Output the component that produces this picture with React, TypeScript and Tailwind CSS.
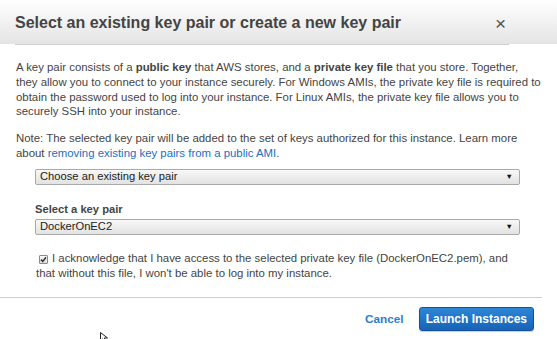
export default function App() {
  return (
    <div className="relative w-[557px] h-[339px] overflow-hidden bg-white font-['Liberation_Sans',Arial,sans-serif] text-[#444]">
      {/* Header */}
      <div className="h-[44px] bg-gradient-to-b from-white to-[#e4e4e4] flex items-center justify-between pl-[15px] pr-[51px] pt-[2px]">
        <h1 className="text-[16px] font-bold text-[#444] whitespace-nowrap">
          Select an existing key pair or create a new key pair
        </h1>
        <span className="text-[19px] leading-none text-[#555]">×</span>
      </div>
      <div className="ml-[15px] w-[494px] h-px bg-[#cfcfcf]" />

      {/* Body */}
      <div className="px-[16px] pt-[15px] text-[11.4px] leading-[14.8px] text-[#444] whitespace-nowrap">
        <p>
          A key pair consists of a <b>public key</b> that AWS stores, and a <b>private key file</b> that you store. Together,
          <br />
          they allow you to connect to your instance securely. For Windows AMIs, the private key file is required to
          <br />
          obtain the password used to log into your instance. For Linux AMIs, the private key file allows you to
          <br />
          securely SSH into your instance.
        </p>
        <p className="mt-[12px]">
          Note: The selected key pair will be added to the set of keys authorized for this instance. Learn more
          <br />
          about <span className="text-[#1a6fc0]">removing existing key pairs from a public AMI</span>.
        </p>

        <div className="pl-[19px] pr-[21px] mt-[8px]">
          <FakeSelect label="Choose an existing key pair" />
          <div className="mt-[16px] font-bold text-[11.2px] leading-[16px]">Select a key pair</div>
          <div className="mt-[2px]">
            <FakeSelect label="DockerOnEC2" />
          </div>
        </div>

        <div className="mt-[16px] pl-[20px]">
          <p>
            <span className="inline-flex items-center justify-center w-[9px] h-[9px] border border-[#8a8a8a] rounded-[1px] bg-gradient-to-b from-[#fafafa] to-[#dcdcdc] align-[-1px] ml-[3px] mr-[4px]">
              <svg width="7" height="7" viewBox="0 0 7 7">
                <path d="M1 3.6 L2.8 5.4 L6 1.2" fill="none" stroke="#333" strokeWidth="1.5" />
              </svg>
            </span>
            I acknowledge that I have access to the selected private key file (DockerOnEC2.pem), and
            <br />
            that without this file, I won't be able to log into my instance.
          </p>
        </div>
      </div>

      <div className="mt-[17px] w-[542px] h-px bg-[#cfcfcf]" />

      {/* Footer */}
      <div className="flex items-center justify-end gap-[15px] pr-[23px] pt-[9px]">
        <span className="text-[11.8px] font-bold text-[#2b7fd1]">Cancel</span>
        <button className="h-[24px] px-[6px] rounded-[3px] border border-[#15509a] bg-gradient-to-b from-[#2d86d6] to-[#1763b7] text-white text-[12px] font-bold shadow-[0_1px_1px_rgba(0,0,0,0.2)]">
          Launch Instances
        </button>
      </div>

      {/* mouse cursor */}
      <svg className="absolute left-[100px] top-[332px]" width="9" height="10" viewBox="0 0 9 10">
        <path d="M0.5 0.5 L0.5 9 L2.8 6.8 L5 9.5 L6.3 8.6 L4.2 6 L7.5 6 Z" fill="#fff" stroke="#222" strokeWidth="1" />
      </svg>
    </div>
  );
}

function FakeSelect({ label }: { label: string }) {
  return (
    <div className="h-[16px] flex items-center justify-between border border-[#a9a9a9] rounded-[2px] bg-gradient-to-b from-[#f8f8f8] to-[#e2e2e2] pl-[4px] pr-[6px] text-[11.2px] leading-none text-[#222]">
      <span>{label}</span>
      <span className="text-[7.5px] text-[#111]">▼</span>
    </div>
  );
}
